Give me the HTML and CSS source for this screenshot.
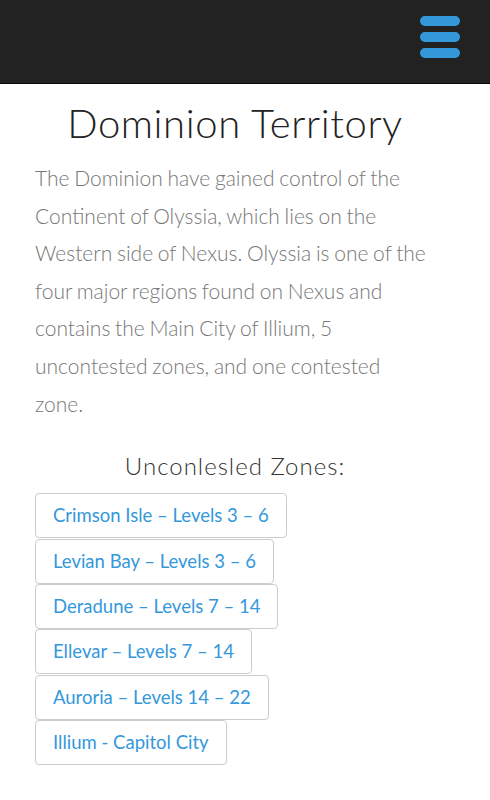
FILE: index.html
```html
<!DOCTYPE html>
<html lang="en">
<head>
<meta charset="utf-8">
<title>Dominion Territory</title>
<link rel="stylesheet" href="styles.css">
</head>
<body>
<header class="topbar">
  <button class="menu-toggle" aria-label="Menu">
    <span class="bar"></span>
    <span class="bar"></span>
    <span class="bar"></span>
  </button>
</header>
<main class="content">
  <h1 class="title">Dominion Territory</h1>
  <p class="intro">The Dominion have gained control of the Continent of Olyssia, which lies on the Western side of Nexus. Olyssia is one of the four major regions found on Nexus and contains the Main City of Illium, 5 uncontested zones, and one contested zone.</p>
  <h2 class="subtitle">Unconlesled Zones:</h2>
  <div class="zones">
    <a class="zone-btn" href="#">Crimson Isle – Levels 3 – 6</a>
    <a class="zone-btn" href="#">Levian Bay – Levels 3 – 6</a>
    <a class="zone-btn" href="#">Deradune – Levels 7 – 14</a>
    <a class="zone-btn" href="#">Ellevar – Levels 7 – 14</a>
    <a class="zone-btn" href="#">Auroria – Levels 14 – 22</a>
    <a class="zone-btn" href="#">Illium - Capitol City</a>
  </div>
</main>
</body>
</html>
```
FILE: styles.css
```css
* { box-sizing: border-box; }
html, body { margin: 0; padding: 0; background: #fff; }
body { font-family: "Lato", "Liberation Sans", sans-serif; }

.topbar {
  height: 84px;
  background: #222;
  border-bottom: 1px solid #080808;
  display: flex;
  justify-content: flex-end;
  align-items: flex-start;
  padding: 16px 30px 0 0;
}
.menu-toggle {
  background: none;
  border: 0;
  padding: 0;
  width: 40px;
  display: flex;
  flex-direction: column;
  gap: 6px;
  cursor: pointer;
}
.bar {
  display: block;
  width: 40px;
  height: 10px;
  border-radius: 5px;
  background: #3498db;
}

.content {
  padding: 0 35px;
}
.title {
  margin: 14px 0 0;
  font-family: "Lato", sans-serif;
  font-weight: 300;
  font-size: 40px;
  line-height: 50px;
  color: #222;
  text-align: center;
  padding-right: 20px;
  letter-spacing: 0.6px;
}
.intro {
  margin: 11px 0 0;
  padding-right: 25px;
  font-weight: 300;
  font-size: 21px;
  line-height: 37.6px;
  color: #777;
  word-spacing: -1px;
}
.subtitle {
  margin: 29px 0 12px;
  font-family: "Lato", sans-serif;
  font-weight: 300;
  font-size: 24px;
  line-height: 30px;
  color: #333;
  text-align: center;
  padding-right: 20px;
  letter-spacing: 1px;
}
.zones {
  display: flex;
  flex-direction: column;
  align-items: flex-start;
  gap: 0.4px;
}
.zone-btn {
  display: inline-block;
  padding: 11px 17px;
  border: 1px solid #ccc;
  border-radius: 4px;
  color: #3498db;
  font-size: 18.5px;
  line-height: 21px;
  text-decoration: none;
  background: #fff;
}
```
